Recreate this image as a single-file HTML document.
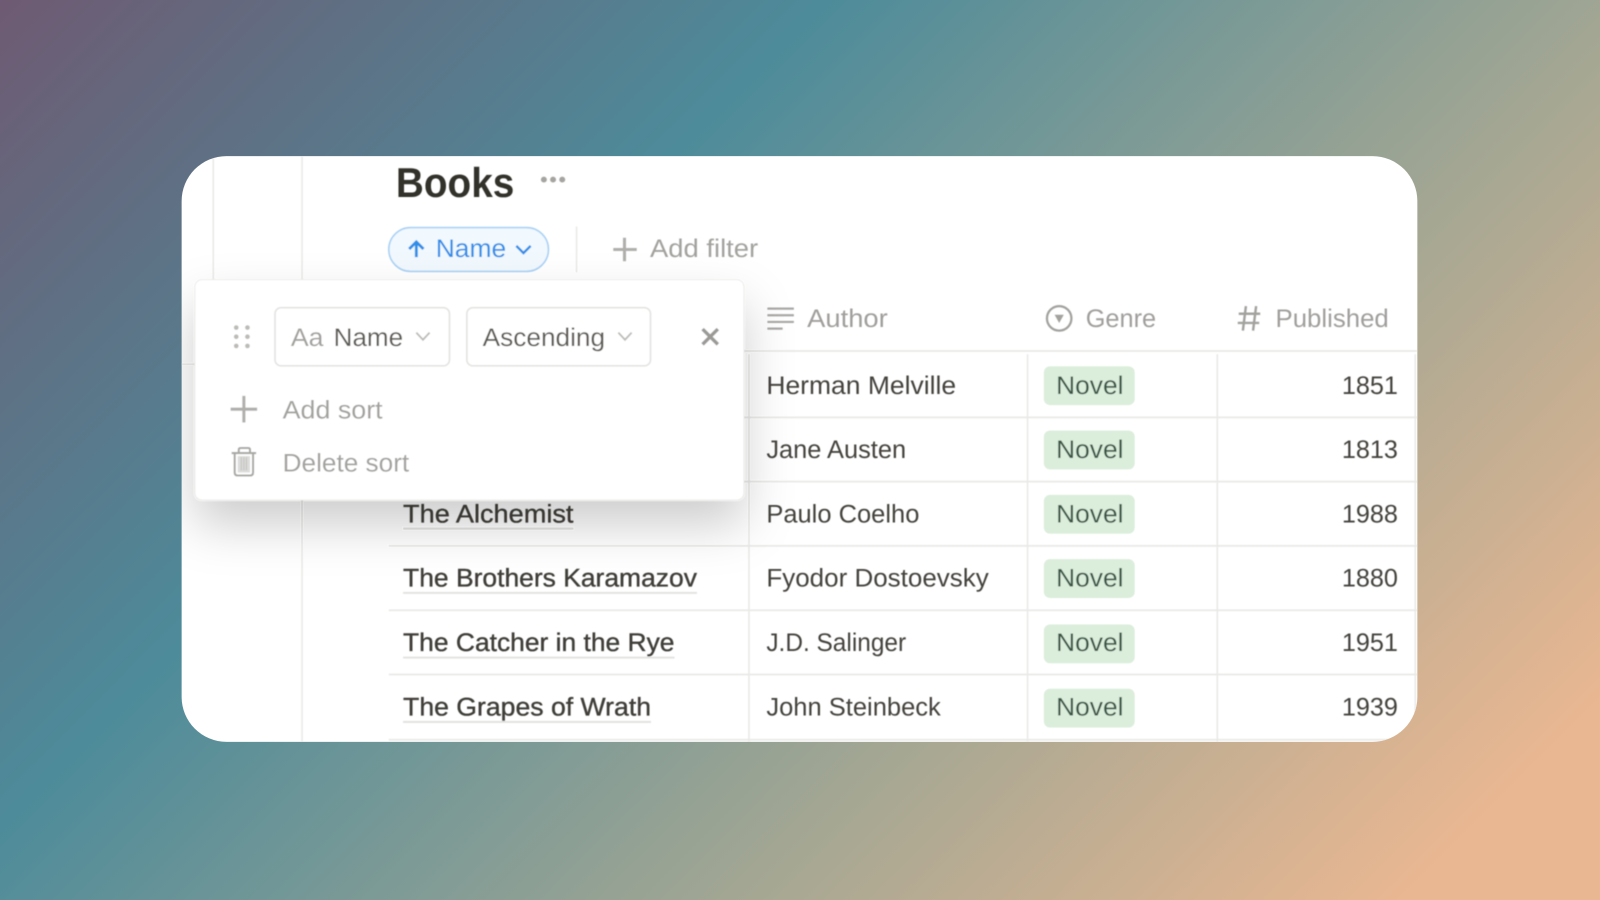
<!DOCTYPE html>
<html><head><meta charset="utf-8"><title>Books</title>
<style>
html,body{margin:0;padding:0;width:1600px;height:900px;overflow:hidden}
body{background:linear-gradient(135deg,#6e5a72 0%,#4d8b9a 33%,#a5a793 66%,#e9b792 92%,#e9b792 100%)}
svg{position:absolute;left:0;top:0;display:block}
text{font-family:"Liberation Sans",sans-serif;font-size:25px;fill:#45433e;text-rendering:geometricPrecision}
.g{fill:#a3a29f}
.h{fill:#a09f9c}
.n{fill:#3f3d38;stroke:#3f3d38;stroke-width:.35px}
.tag{fill:#3a5545}
.l{stroke:#e9e9e7;stroke-width:1.5;fill:none}
.u{stroke:#e3e3e1;stroke-width:2}
.ic{fill:none;stroke:#b0afac;stroke-width:3;stroke-linecap:butt}
</style></head><body>
<svg width="1600" height="900" viewBox="0 0 1568 882" xmlns="http://www.w3.org/2000/svg">
<defs>
<clipPath id="card"><rect x="178" y="153" width="1211" height="574" rx="44"/></clipPath>
<filter id="s" x="-30%" y="-40%" width="160%" height="220%"><feDropShadow dx="0" dy="24" stdDeviation="24" flood-color="#000" flood-opacity=".2"/></filter>
<filter id="b" x="-2%" y="-2%" width="104%" height="104%"><feGaussianBlur stdDeviation=".5"/></filter>
</defs>
<rect x="178" y="153" width="1211" height="574" rx="44" fill="#fff"/>
<g clip-path="url(#card)"><g filter="url(#b)">
<path class="l" d="M209 153V280M296 153V727M178 357H200"/>
<path class="l" d="M381 344H1389M381 409H1389M381 472H1389M381 535H1389M381 598H1389M381 661H1389M381 725H1389" style="stroke-width:1.700"/>
<path class="l" d="M734 347V727M1007 347V727M1193 347V727M1387 347V727"/>

<text x="388" y="193" textLength="116" lengthAdjust="spacingAndGlyphs" style="font-size:41px;font-weight:700;fill:#33312c">Books</text>
<g fill="#a5a4a1"><circle cx="533" cy="176" r="2.900"/><circle cx="542" cy="176" r="2.900"/><circle cx="551" cy="176" r="2.900"/></g>

<rect x="381" y="223" width="156.500" height="43" rx="21.500" fill="#f1f8fe" stroke="#abd2f5" stroke-width="1.600"/>
<path d="M408 252V238M401 244L408 237L415 244" fill="none" stroke="#2e8fe8" stroke-width="2.800"/>
<text x="427" y="252" textLength="69" lengthAdjust="spacingAndGlyphs" style="fill:#2e8fe8">Name</text>
<path d="M506 241L513 248L520 241" fill="none" stroke="#2e8fe8" stroke-width="2.400"/>
<path class="l" d="M565 222V267"/>
<path class="ic" d="M612 233V256M601 244.500H624"/>
<text class="g" x="637" y="252" textLength="106" lengthAdjust="spacingAndGlyphs">Add filter</text>

<path d="M752 302.500H778M752 309H778M752 315.500H778M752 322H767" fill="none" stroke="#a9a8a5" stroke-width="2.200"/>
<text class="h" x="791" y="320.500" textLength="79" lengthAdjust="spacingAndGlyphs">Author</text>
<circle cx="1038" cy="312" r="12" fill="none" stroke="#a3a29f" stroke-width="2.200"/>
<path d="M1033.500 308.500H1042.500L1038 316.500Z" fill="#a3a29f"/>
<text class="h" x="1064" y="320.500" textLength="69" lengthAdjust="spacingAndGlyphs">Genre</text>
<path d="M1221 300L1218 324M1231 300L1228 324M1214 307.500H1235M1213 316.500H1234" fill="none" stroke="#a3a29f" stroke-width="2.400"/>
<text class="h" x="1250" y="320.500" textLength="111" lengthAdjust="spacingAndGlyphs">Published</text>

<text x="751" y="386" textLength="186" lengthAdjust="spacingAndGlyphs">Herman Melville</text>
<text x="751" y="449" textLength="137" lengthAdjust="spacingAndGlyphs">Jane Austen</text>
<text x="751" y="512" textLength="150" lengthAdjust="spacingAndGlyphs">Paulo Coelho</text>
<text x="751" y="575" textLength="218" lengthAdjust="spacingAndGlyphs">Fyodor Dostoevsky</text>
<text x="751" y="638" textLength="137" lengthAdjust="spacingAndGlyphs">J.D. Salinger</text>
<text x="751" y="701" textLength="171" lengthAdjust="spacingAndGlyphs">John Steinbeck</text>

<g fill="#dbeddb">
<rect x="1023" y="359" width="89" height="38" rx="6"/>
<rect x="1023" y="422" width="89" height="38" rx="6"/>
<rect x="1023" y="485" width="89" height="38" rx="6"/>
<rect x="1023" y="548" width="89" height="38" rx="6"/>
<rect x="1023" y="612" width="89" height="38" rx="6"/>
<rect x="1023" y="675" width="89" height="38" rx="6"/>
</g>
<text class="tag" x="1035" y="386" textLength="66" lengthAdjust="spacingAndGlyphs">Novel</text>
<text class="tag" x="1035" y="449" textLength="66" lengthAdjust="spacingAndGlyphs">Novel</text>
<text class="tag" x="1035" y="512" textLength="66" lengthAdjust="spacingAndGlyphs">Novel</text>
<text class="tag" x="1035" y="575" textLength="66" lengthAdjust="spacingAndGlyphs">Novel</text>
<text class="tag" x="1035" y="638" textLength="66" lengthAdjust="spacingAndGlyphs">Novel</text>
<text class="tag" x="1035" y="701" textLength="66" lengthAdjust="spacingAndGlyphs">Novel</text>

<text x="1315" y="386" textLength="55" lengthAdjust="spacingAndGlyphs">1851</text>
<text x="1315" y="449" textLength="55" lengthAdjust="spacingAndGlyphs">1813</text>
<text x="1315" y="512" textLength="55" lengthAdjust="spacingAndGlyphs">1988</text>
<text x="1315" y="575" textLength="55" lengthAdjust="spacingAndGlyphs">1880</text>
<text x="1315" y="638" textLength="55" lengthAdjust="spacingAndGlyphs">1951</text>
<text x="1315" y="701" textLength="55" lengthAdjust="spacingAndGlyphs">1939</text>

<text class="n" x="395" y="512" textLength="167" lengthAdjust="spacingAndGlyphs">The Alchemist</text>
<text class="n" x="395" y="575" textLength="288" lengthAdjust="spacingAndGlyphs">The Brothers Karamazov</text>
<text class="n" x="395" y="638" textLength="266" lengthAdjust="spacingAndGlyphs">The Catcher in the Rye</text>
<text class="n" x="395" y="701" textLength="243" lengthAdjust="spacingAndGlyphs">The Grapes of Wrath</text>
<path class="u" d="M395 518H562M395 581H683M395 644.500H661M395 707.500H638"/>

<rect x="191" y="274" width="538" height="216" rx="7" fill="#fff" filter="url(#s)"/>
<rect x="191" y="274" width="538" height="216" rx="7" fill="#fff" stroke="#ececea" stroke-width="1"/>
<g fill="#bcbbb8"><circle cx="231.500" cy="321" r="2.300"/><circle cx="242.500" cy="321" r="2.300"/><circle cx="231.500" cy="330" r="2.300"/><circle cx="242.500" cy="330" r="2.300"/><circle cx="231.500" cy="339" r="2.300"/><circle cx="242.500" cy="339" r="2.300"/></g>
<rect x="269.500" y="301.500" width="171" height="57" rx="6" fill="#fff" stroke="#e3e3e1" stroke-width="1.600"/>
<text class="g" x="285" y="339" textLength="32" lengthAdjust="spacingAndGlyphs">Aa</text>
<text x="327" y="339" textLength="68" lengthAdjust="spacingAndGlyphs" style="fill:#5e5c57">Name</text>
<path d="M408 326L414.500 333L421 326" fill="none" stroke="#bdbcb9" stroke-width="1.800"/>
<rect x="457.500" y="301.500" width="180" height="57" rx="6" fill="#fff" stroke="#e3e3e1" stroke-width="1.600"/>
<text x="473" y="339" textLength="120" lengthAdjust="spacingAndGlyphs" style="fill:#5e5c57">Ascending</text>
<path d="M606 326L612.500 333L619 326" fill="none" stroke="#bdbcb9" stroke-width="1.800"/>
<path d="M688.500 322.500L703.500 337.500M703.500 322.500L688.500 337.500" fill="none" stroke="#9b9a97" stroke-width="3.400"/>

<path class="ic" d="M239 388V414M226 401H252"/>
<text class="g" x="277" y="410" textLength="98" lengthAdjust="spacingAndGlyphs">Add sort</text>
<g fill="none" stroke="#a9a8a5" stroke-width="2">
<path d="M227 444H251"/>
<path d="M234 444V440.500Q234 439 236 439H243Q245 439 245 440.500V444"/>
<path d="M230 444V463Q230 466 233 466H245Q248 466 248 463V444" />
</g>
<rect x="233" y="447" width="12" height="16" fill="#dcdcda"/>
<path d="M236.500 448V461M239 448V461M241.500 448V461" stroke="#c2c1be" stroke-width="1"/>
<text class="g" x="277" y="462" textLength="124" lengthAdjust="spacingAndGlyphs">Delete sort</text>
</g></g>
</svg>
</body></html>
